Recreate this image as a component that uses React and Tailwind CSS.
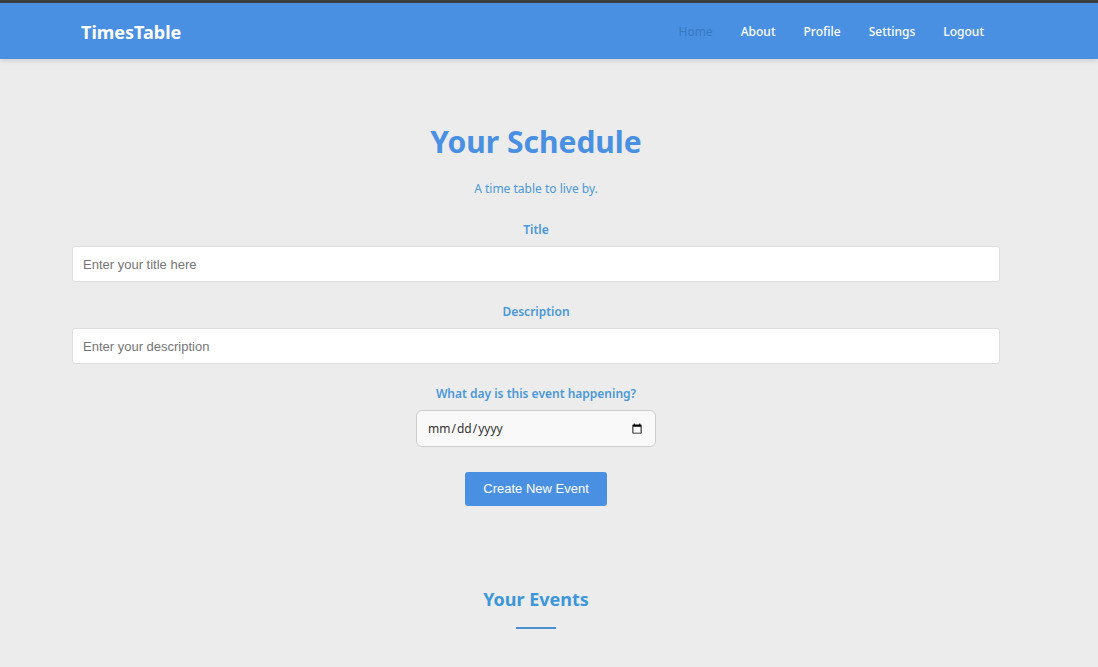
const links = ["Home", "About", "Profile", "Settings", "Logout"];

const textFields = [
  { id: "title", label: "Title", placeholder: "Enter your title here" },
  { id: "description", label: "Description", placeholder: "Enter your description" },
];

function Header() {
  return (
    <header className="border-t-[3px] border-[#3a3d40] bg-[#4a90e2] shadow-[0_2px_5px_rgba(0,0,0,0.12)]">
      <div className="flex h-14 items-center justify-between pt-0.5 pr-[114px] pl-[81px]">
        <a href="#" className="text-lg font-bold text-white">TimesTable</a>
        <nav className="flex gap-7 text-xs font-medium">
          {links.map((link) => (
            <a key={link} href="#" className={link === "Home" ? "font-normal text-[#357abd]" : "text-white"}>
              {link}
            </a>
          ))}
        </nav>
      </div>
    </header>
  );
}

function TextField({ id, label, placeholder }) {
  return (
    <div className="flex w-full flex-col items-center gap-[6px]">
      <label htmlFor={id} className="text-xs leading-5 font-semibold">{label}</label>
      <input
        id={id}
        type="text"
        placeholder={placeholder}
        className="h-9 w-full rounded-[3px] border border-[#dddddd] bg-white px-[10px] font-['Liberation_Sans',sans-serif] text-[13px] text-[#333333] placeholder:text-[#757575]"
      />
    </div>
  );
}

export default function App() {
  return (
    <div className="min-h-screen bg-[#ececec] font-['Noto_Sans',sans-serif] text-[#4a98d8]">
      <Header />
      <main className="flex flex-col items-center pt-[63px] pr-[98px] pb-9 pl-[72px]">
        <h1 className="text-3xl leading-10 font-bold text-[#4a90e2]">Your Schedule</h1>
        <p className="mt-[17px] text-xs leading-5">A time table to live by.</p>
        <form className="mt-[21px] flex w-full flex-col items-center gap-5">
          {textFields.map((field) => (
            <TextField key={field.id} {...field} />
          ))}
          <div className="flex flex-col items-center gap-[6px]">
            <label htmlFor="day" className="text-xs leading-5 font-semibold">
              What day is this event happening?
            </label>
            <input
              id="day"
              type="date"
              className="h-[37px] w-60 rounded-md border border-[#cccccc] bg-[#f9f9f9] px-[10px] text-xs text-[#333333]"
            />
          </div>
          <button
            type="button"
            className="mt-[5px] h-[34px] rounded-[3px] bg-[#4a90e2] px-[18px] font-['Liberation_Sans',sans-serif] text-[13px] text-white"
          >
            Create New Event
          </button>
        </form>
        <section className="mt-[79px] flex flex-col items-center">
          <h2 className="text-lg leading-7 font-bold text-[#3b97d9]">Your Events</h2>
          <div className="mt-[14px] h-0.5 w-10 bg-[#4a90d0]" />
        </section>
      </main>
    </div>
  );
}
